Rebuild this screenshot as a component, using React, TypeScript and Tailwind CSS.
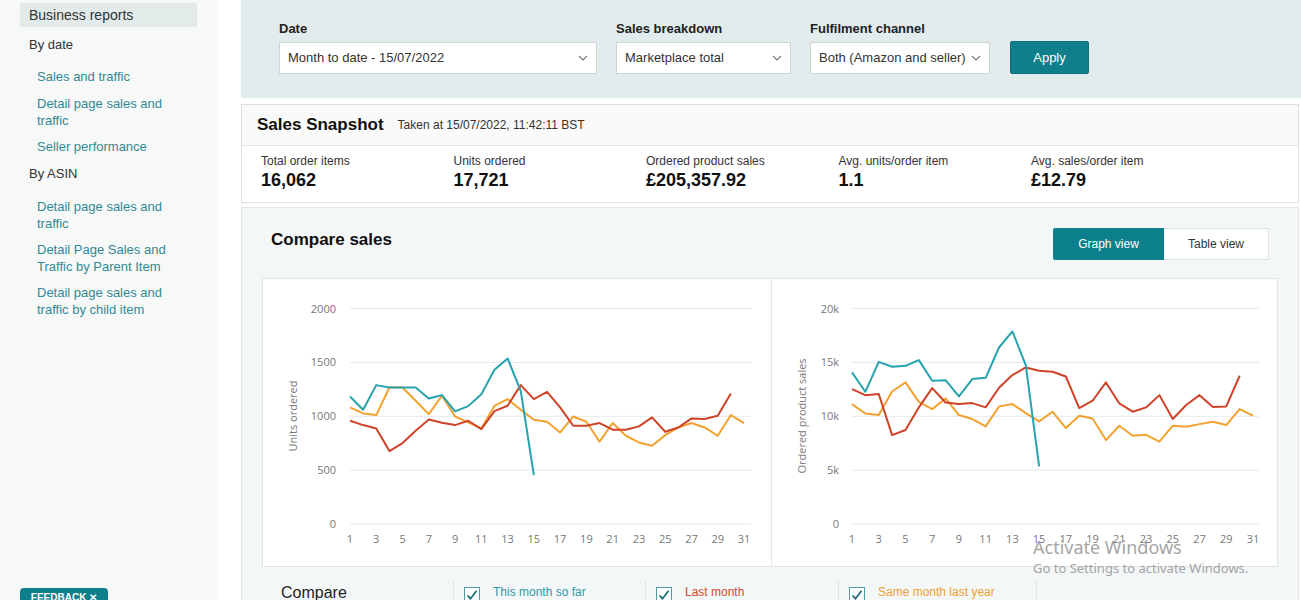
import React from 'react'

const TEAL = '#26a3ae'
const RED = '#cf4328'
const ORANGE = '#f2a231'

const unitsThis = [1184, 1060, 1289, 1267, 1267, 1267, 1165, 1196, 1045, 1094, 1205, 1431, 1536, 1236, 454]
const unitsLast = [958, 918, 887, 677, 751, 865, 970, 940, 918, 958, 881, 1048, 1097, 1289, 1159, 1227, 1082, 912, 912, 937, 875, 875, 906, 989, 856, 896, 980, 974, 1005, 1212]
const unitsYear = [1082, 1026, 1011, 1267, 1267, 1144, 1020, 1190, 998, 943, 887, 1097, 1159, 1060, 968, 949, 850, 998, 949, 764, 937, 819, 757, 726, 825, 896, 937, 896, 819, 1011, 937]

const salesThis = [14.07, 12.27, 15.05, 14.59, 14.68, 15.21, 13.29, 13.35, 11.84, 13.45, 13.57, 16.38, 17.87, 14.74, 5.35]
const salesLast = [12.52, 11.96, 12.06, 8.25, 8.72, 10.82, 12.61, 11.28, 11.13, 11.22, 10.82, 12.64, 13.82, 14.53, 14.22, 14.13, 13.69, 10.76, 11.44, 13.14, 11.19, 10.42, 10.82, 11.96, 9.74, 11.04, 11.96, 10.85, 10.91, 13.76]
const salesYear = [11.13, 10.26, 10.11, 12.3, 13.14, 11.34, 10.66, 11.65, 10.11, 9.74, 9.06, 10.91, 11.13, 10.29, 9.52, 10.42, 8.9, 10.05, 9.8, 7.79, 9.12, 8.19, 8.28, 7.64, 9.12, 9.03, 9.27, 9.49, 9.18, 10.66, 10.05]

const days = Array.from({ length: 16 }, (_, i) => i * 2 + 1)

function LineChart({
  series,
  max,
  ticks,
  title,
  x0,
  x1,
  gx0,
  gx1,
  lx,
  tx,
}: {
  series: { data: number[]; color: string }[]
  max: number
  ticks: string[]
  title: string
  x0: number
  x1: number
  gx0: number
  gx1: number
  lx: number
  tx: number
}) {
  const top = 29.5
  const bottom = 245
  const y = (v: number) => bottom - (v / max) * (bottom - top)
  const x = (d: number) => x0 + ((d - 1) * (x1 - x0)) / 30

  return (
    <svg width="508" height="288" className="block" style={{ fontFamily: '"Open Sans", sans-serif' }}>
      {ticks.map((t, i) => {
        const v = (max / 4) * i
        return (
          <g key={t}>
            <line x1={gx0} x2={gx1} y1={y(v)} y2={y(v)} stroke="#e4e8ea" strokeWidth="1" />
            <text x={lx} y={y(v) + 4} textAnchor="end" fontSize="11" fill="#777">
              {t}
            </text>
          </g>
        )
      })}
      {days.map((d) => (
        <text key={d} x={x(d)} y={264} textAnchor="middle" fontSize="11" fill="#777">
          {d}
        </text>
      ))}
      <text
        x={tx}
        y={137}
        transform={`rotate(-90 ${tx} 137)`}
        textAnchor="middle"
        fontSize="11"
        fill="#777"
      >
        {title}
      </text>
      {series.map((s) => (
        <polyline
          key={s.color}
          fill="none"
          stroke={s.color}
          strokeWidth="2"
          strokeLinejoin="round"
          points={s.data.map((v, i) => `${x(i + 1)},${y(v)}`).join(' ')}
        />
      ))}
    </svg>
  )
}

function Chevron() {
  return (
    <svg width="10" height="6" viewBox="0 0 10 6" className="ml-auto shrink-0">
      <path d="M1 1l4 4 4-4" fill="none" stroke="#777" strokeWidth="1.1" />
    </svg>
  )
}

function Select({ label, value, width }: { label: string; value: string; width: string }) {
  return (
    <div className={`flex flex-col ${width}`}>
      <span className="text-[13px] font-bold text-[#222] leading-[17px] mb-[5px]">{label}</span>
      <div className="flex items-center h-[32px] bg-white border border-[#cfd4d6] px-[8px] pr-[8px] text-[13px] text-[#333]">
        <span className="whitespace-nowrap">{value}</span>
        <Chevron />
      </div>
    </div>
  )
}

function Check() {
  return (
    <svg width="16" height="16" viewBox="0 0 16 16" className="shrink-0 mt-[4px]">
      <rect x="0.5" y="0.5" width="15" height="15" fill="white" stroke="#4d9ea8" />
      <path d="M3.5 8.5l3 3.2 6-8" fill="none" stroke="#1f6f7a" strokeWidth="1.8" />
    </svg>
  )
}

function Metric({ label, value }: { label: string; value: string }) {
  return (
    <div className="w-[192.5px] flex flex-col">
      <span className="text-[12px] leading-[15px] text-[#333]">{label}</span>
      <span className="text-[18px] leading-[22px] font-bold text-[#111]">{value}</span>
    </div>
  )
}

const links1 = ['Sales and traffic', 'Detail page sales and traffic', 'Seller performance']
const links2 = ['Detail page sales and traffic', 'Detail Page Sales and Traffic by Parent Item', 'Detail page sales and traffic by child item']

export default function App() {
  return (
    <div
      className="relative flex w-[1301px] h-[600px] overflow-hidden bg-white"
      style={{ fontFamily: '"Liberation Sans", Arial, sans-serif' }}
    >
      <aside className="relative w-[217px] shrink-0 bg-[#f7f8f8] h-full">
        <div className="ml-[20px] mt-[3px] w-[177px] h-[24px] bg-[#e3eaea] pl-[9px] text-[14px] leading-[24px] text-[#333]">
          Business reports
        </div>
        <div className="pl-[29px] text-[13px] leading-[17px]">
          <div className="mt-[9px] text-[#333]">By date</div>
          <div className="mt-[15px] pl-[8px] flex flex-col gap-[9.5px] w-[163px]">
            {links1.map((l) => (
              <span key={l} className="text-[#2f8a96]">
                {l}
              </span>
            ))}
          </div>
          <div className="mt-[10px] text-[#333]">By ASIN</div>
          <div className="mt-[16px] pl-[8px] flex flex-col gap-[9px] w-[163px]">
            {links2.map((l) => (
              <span key={l} className="text-[#2f8a96]">
                {l}
              </span>
            ))}
          </div>
        </div>
        <div className="absolute left-[20px] top-[588px] w-[88px] h-[20px] rounded-t-[4px] bg-[#0e7f8b] text-white text-[10px] font-bold leading-[20px] text-center">
          FEEDBACK ✕
        </div>
      </aside>

      <div className="w-[24px] shrink-0" />

      <main className="flex-1 flex flex-col min-h-0">
        <div className="h-[98px] shrink-0 bg-[#e3ecec] flex items-end gap-[19px] pl-[38px] pb-[24px]">
          <Select label="Date" value="Month to date - 15/07/2022" width="w-[318px]" />
          <Select label="Sales breakdown" value="Marketplace total" width="w-[175px]" />
          <Select label="Fulfilment channel" value="Both (Amazon and seller)" width="w-[180px]" />
          <button className="ml-[1px] mb-[0px] w-[79px] h-[33px] bg-[#0e7f8b] text-white text-[13px] rounded-[2px] border border-[#0a6f7a]">
            Apply
          </button>
        </div>

        <div className="shrink-0 mt-[6px] mr-[3px] border border-[#dde1e2]">
          <div className="h-[41px] bg-[#fafafa] border-b border-[#e2e5e6] flex items-center pl-[15px] gap-[14px]">
            <span className="text-[17px] font-bold text-[#111]">Sales Snapshot</span>
            <span className="text-[12px] text-[#333]">Taken at 15/07/2022, 11:42:11 BST</span>
          </div>
          <div className="h-[56px] flex items-start pt-[8px] pl-[19px]">
            <Metric label="Total order items" value="16,062" />
            <Metric label="Units ordered" value="17,721" />
            <Metric label="Ordered product sales" value="£205,357.92" />
            <Metric label="Avg. units/order item" value="1.1" />
            <Metric label="Avg. sales/order item" value="£12.79" />
          </div>
        </div>

        <div className="shrink-0 mt-[4px] mr-[3px] h-[400px] bg-[#f4f7f8] border border-[#e0e6e7] px-[20px]">
          <div className="flex items-start justify-between pt-[19px] pl-[9px] pr-[9px]">
            <span className="text-[17px] font-bold text-[#111]">Compare sales</span>
            <div className="flex h-[32px] text-[12px] mt-[1px]">
              <span className="w-[111px] flex items-center justify-center bg-[#0b7f8c] text-white rounded-l-[2px]">
                Graph view
              </span>
              <span className="w-[105px] flex items-center justify-center bg-white text-[#333] border border-[#dde2e3] border-l-0">
                Table view
              </span>
            </div>
          </div>
          <div className="mt-[18px] flex bg-white border border-[#e0e5e6] w-[1016px] h-[289px]">
            <div className="border-r border-[#e3e6e7]">
              <LineChart
                series={[
                  { data: unitsYear, color: ORANGE },
                  { data: unitsLast, color: RED },
                  { data: unitsThis, color: TEAL },
                ]}
                max={2000}
                ticks={['0', '500', '1000', '1500', '2000']}
                title="Units ordered"
                x0={87}
                x1={481}
                gx0={87}
                gx1={488}
                lx={73}
                tx={34}
              />
            </div>
            <LineChart
              series={[
                { data: salesYear, color: ORANGE },
                { data: salesLast, color: RED },
                { data: salesThis, color: TEAL },
              ]}
              max={20}
              ticks={['0', '5k', '10k', '15k', '20k']}
              title="Ordered product sales"
              x0={80}
              x1={481}
              gx0={80}
              gx1={487}
              lx={67}
              tx={34}
            />
          </div>
          <div className="mt-[14px] flex h-[40px]">
            <div className="w-[191px] pl-[19px] text-[16px] text-[#222]">Compare</div>
            <div className="w-[192px] border-l border-[#dfe3e4] flex gap-[13px] pl-[10px] pt-[2px]">
              <Check />
              <span className="text-[12px] text-[#2f9aa6]">This month so far</span>
            </div>
            <div className="w-[193px] border-l border-[#dfe3e4] flex gap-[13px] pl-[10px] pt-[2px]">
              <Check />
              <span className="text-[12px] text-[#d24a2c]">Last month</span>
            </div>
            <div className="w-[199px] border-l border-r border-[#dfe3e4] flex gap-[13px] pl-[10px] pt-[2px]">
              <Check />
              <span className="text-[12px] text-[#f0a030]">Same month last year</span>
            </div>
          </div>
        </div>
      </main>

      <div
        className="absolute left-[1033px] top-[535px] text-[#8f8f8f] opacity-80 pointer-events-none"
        style={{ fontFamily: '"Noto Sans", "Open Sans", sans-serif' }}
      >
        <div className="text-[18px] leading-[24px]">Activate Windows</div>
        <div className="text-[13px] leading-[18px]">Go to Settings to activate Windows.</div>
      </div>
    </div>
  )
}
